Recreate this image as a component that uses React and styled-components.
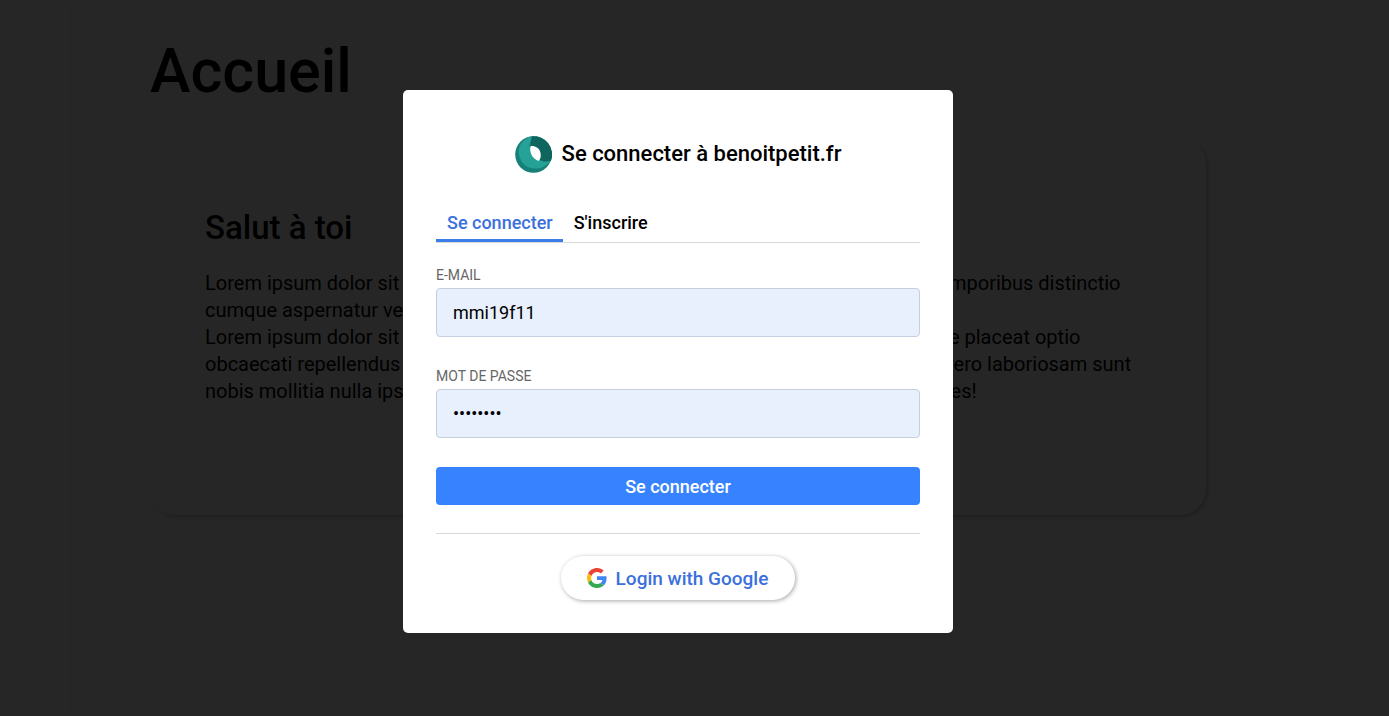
import React from "react";
import styled, { createGlobalStyle } from "styled-components";

const GlobalStyle = createGlobalStyle`
  *, *::before, *::after { box-sizing: border-box; }
  body {
    margin: 0;
    background: #fff;
    color: #000;
    font-family: Roboto, "Liberation Sans", sans-serif;
  }
  h1, h2, p { margin: 0; font-weight: 500; }
  button, input { font-family: inherit; }
`;

const Page = styled.div`
  min-height: 100vh;
  padding: 0 105px 0 72px;
  display: flex;
`;

const Container = styled.main`
  flex: 1;
  min-width: 0;
  padding: 35px 78px;
  box-shadow: 0 0 6px rgba(0, 0, 0, 0.08);
`;

const PageTitle = styled.h1`
  font-size: 61px;
  line-height: 72px;
`;

const Card = styled.article`
  margin-top: 31px;
  min-height: 377px;
  padding: 70px 55px;
  border-radius: 26px;
  box-shadow: 2px 2px 4px rgba(0, 0, 0, 0.22);
`;

const CardTitle = styled.h2`
  margin-bottom: 22px;
  font-size: 33px;
  line-height: 40px;
`;

const Paragraph = styled.p`
  font-size: 20px;
  font-weight: 400;
  line-height: 27px;
`;

const Line = styled.span`
  display: grid;
  grid-template-columns: minmax(0, 1fr) 207px;
  white-space: pre;
`;

const Overlay = styled.div`
  position: fixed;
  inset: 0;
  display: flex;
  align-items: center;
  justify-content: center;
  padding: 7px 33px 0 0;
  background: rgba(0, 0, 0, 0.85);
`;

const Dialog = styled.section`
  width: 100%;
  max-width: 550px;
  padding: 45px 33px 33px;
  border-radius: 5px;
  background: #fff;
`;

const Brand = styled.header`
  display: flex;
  align-items: center;
  justify-content: center;
  gap: 10px;
  height: 38px;
`;

const BrandTitle = styled.h2`
  font-size: 22px;
  line-height: 30px;
`;

const Tabs = styled.div`
  display: flex;
  margin-top: 32px;
  border-bottom: 1px solid #d9d9d9;
`;

const Tab = styled.button`
  height: 37px;
  padding: 2px 10px 0 11px;
  border: 0;
  border-bottom: 3px solid ${(p) => (p.$active ? "#3b7de9" : "transparent")};
  background: none;
  color: ${(p) => (p.$active ? "#3b70dd" : "#000")};
  font-size: 18px;
  font-weight: 500;
  line-height: 24px;
  cursor: pointer;
`;

const Form = styled.form`
  padding-bottom: 28px;
  border-bottom: 1px solid #d9d9d9;
`;

const Field = styled.div`
  display: flex;
  flex-direction: column;
  gap: 4px;
  padding: 23px 0 7px;
`;

const Label = styled.label`
  color: #666;
  font-size: 14px;
  line-height: 18px;
  text-transform: uppercase;
`;

const Input = styled.input`
  width: 100%;
  height: 49px;
  padding: 0 16px;
  border: 1px solid #c5cfdf;
  border-radius: 4px;
  background: #e8f0fe;
  color: #000;
  font-size: 18px;
  outline: none;
`;

const Submit = styled.button`
  display: block;
  width: 100%;
  height: 38px;
  margin-top: 22px;
  border: 0;
  border-radius: 4px;
  background: #3783ff;
  color: #fff;
  font-size: 18px;
  font-weight: 500;
  cursor: pointer;
`;

const GoogleButton = styled.button`
  display: flex;
  align-items: center;
  gap: 9px;
  height: 44px;
  margin: 22px auto 0;
  padding: 0 27px 0 26px;
  border: 0;
  border-radius: 22px;
  background: #fff;
  box-shadow: 1px 1px 4px rgba(0, 0, 0, 0.35);
  color: #3b70dd;
  font-size: 19px;
  font-weight: 500;
  cursor: pointer;
`;

const lines = [
  ["Lorem ipsum dolor sit", " mporibus distinctio"],
  ["cumque aspernatur ver", ""],
  ["Lorem ipsum dolor sit", " e placeat optio"],
  ["obcaecati repellendus", "vero laboriosam sunt"],
  ["nobis mollitia nulla ips", "res!"],
];

function Logo() {
  return (
    <svg width="37" height="37" viewBox="0 0 37 37" aria-hidden="true">
      <circle cx="18.5" cy="18.5" r="18.3" fill="#178078" />
      <path d="M17 .3C7 3 1 12 5 22c3 9 13 13 23 9 4-2 7-5 8-7L25 23 14 10z" fill="#26a196" />
      <path d="M17 .3a18.3 18.3 0 0 1 19 24.5c-4 1.500-9 1-13-2-6-4-9-11-6-22.500z" fill="#0f665f" />
      <path d="M15.500 10.200c4.500-.7 8.500 1.800 9.800 6 1 3.300.4 6.800-1.800 8.800-5.500-2.300-9.500-7.500-8-14.800z" fill="#fff" />
    </svg>
  );
}

function GoogleLogo() {
  return (
    <svg width="20" height="20" viewBox="0 0 48 48" aria-hidden="true">
      <path fill="#EA4335" d="M24 9.500c3.540 0 6.710 1.220 9.210 3.600l6.850-6.850C35.900 2.380 30.470 0 24 0 14.620 0 6.510 5.380 2.560 13.220l7.980 6.190C12.430 13.720 17.740 9.500 24 9.500z" />
      <path fill="#4285F4" d="M46.980 24.550c0-1.570-.15-3.090-.38-4.550H24v9.020h12.940c-.58 2.960-2.260 5.480-4.780 7.180l7.730 6c4.510-4.180 7.090-10.360 7.090-17.650z" />
      <path fill="#FBBC05" d="M10.530 28.590c-.48-1.450-.76-2.990-.76-4.590s.27-3.140.76-4.590l-7.980-6.190C.92 16.460 0 20.120 0 24s.92 7.540 2.560 10.780z" />
      <path fill="#34A853" d="M24 48c6.480 0 11.930-2.130 15.890-5.810l-7.730-6c-2.150 1.450-4.920 2.300-8.160 2.300-6.260 0-11.570-4.220-13.470-9.910l-7.980 6.190C6.510 42.620 14.620 48 24 48z" />
    </svg>
  );
}

export default function App() {
  return (
    <>
      <GlobalStyle />
      <Page>
        <Container>
          <PageTitle>Accueil</PageTitle>
          <Card>
            <CardTitle>Salut à toi</CardTitle>
            <Paragraph>
              {lines.map(([start, end], i) => (
                <Line key={i}>
                  <span>{start}</span>
                  <span>{end}</span>
                </Line>
              ))}
            </Paragraph>
          </Card>
        </Container>
      </Page>
      <Overlay>
        <Dialog role="dialog" aria-modal="true" aria-labelledby="login-title">
          <Brand>
            <Logo />
            <BrandTitle id="login-title">Se connecter à benoitpetit.fr</BrandTitle>
          </Brand>
          <Tabs role="tablist">
            <Tab type="button" role="tab" aria-selected="true" $active>Se connecter</Tab>
            <Tab type="button" role="tab" aria-selected="false">S'inscrire</Tab>
          </Tabs>
          <Form onSubmit={(e) => e.preventDefault()}>
            <Field>
              <Label htmlFor="email">E-mail</Label>
              <Input id="email" type="text" defaultValue="mmi19f11" />
            </Field>
            <Field>
              <Label htmlFor="password">Mot de passe</Label>
              <Input id="password" type="password" defaultValue="password" />
            </Field>
            <Submit type="submit">Se connecter</Submit>
          </Form>
          <GoogleButton type="button">
            <GoogleLogo />
            Login with Google
          </GoogleButton>
        </Dialog>
      </Overlay>
    </>
  );
}
